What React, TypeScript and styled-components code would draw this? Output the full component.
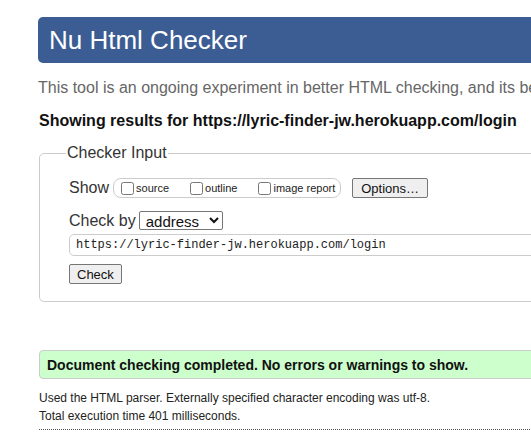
import React from "react";
import styled, { createGlobalStyle } from "styled-components";

const GlobalStyle = createGlobalStyle`
  html, body {
    margin: 0;
    padding: 0;
    background: #fff;
    overflow: hidden;
  }
  body {
    font-family: "Liberation Sans", Arial, sans-serif;
    color: #222;
  }
`;

const Page = styled.div`
  width: 1000px;
  padding: 17px 0 0 38px;
`;

const Title = styled.h1`
  margin: 0;
  height: 46px;
  padding: 0 11px;
  display: flex;
  align-items: center;
  background: #3b5d93;
  color: #fff;
  font-size: 26px;
  font-weight: normal;
  border-radius: 5px;
`;

const Intro = styled.p`
  margin: 16px 0 0;
  font-size: 16px;
  line-height: 18px;
  color: #666;
  white-space: nowrap;
`;

const Results = styled.p`
  margin: 15px 0 0 1px;
  font-size: 16px;
  line-height: 18px;
  font-weight: bold;
  color: #111;
  white-space: nowrap;
`;

const Fieldset = styled.fieldset`
  margin: 14px 0 0 1px;
  padding: 8px 29px 17px;
  border: 1px solid #ccc;
  border-radius: 5px;
`;

const Legend = styled.legend`
  padding: 0 1px;
  margin-left: -3px;
  font-size: 16px;
  color: #333;
`;

const Row = styled.div<{ $mt: number }>`
  display: flex;
  align-items: center;
  gap: 3px;
  font-size: 16px;
  color: #333;
  margin-top: ${(p) => p.$mt}px;
`;

const Options = styled.div`
  display: flex;
  align-items: center;
  height: 18px;
  border: 1px solid #ccc;
  border-radius: 8px;
  padding: 0 5px 0 7px;
  gap: 21px;
  margin-left: 1px;
`;

const CheckLabel = styled.label`
  display: flex;
  align-items: center;
  gap: 2px;
  font-size: 11px;
  color: #222;
  input {
    margin: 0;
    width: 13px;
    height: 13px;
  }
`;

const Button = styled.button<{ $ml?: number; $px: number }>`
  font-family: "Liberation Sans", Arial, sans-serif;
  font-size: 13px;
  color: #111;
  background: #efefef;
  border: 1px solid #767676;
  border-radius: 2px;
  padding: 0 ${(p) => p.$px}px;
  height: 20px;
  margin-left: ${(p) => p.$ml ?? 0}px;
`;

const Select = styled.select`
  font-family: "Liberation Sans", Arial, sans-serif;
  font-size: 15px;
  width: 84px;
  height: 19px;
  padding: 0 2px;
  border: 1px solid #767676;
  border-radius: 2px;
  background: #fff;
  color: #111;
`;

const UrlInput = styled.input`
  display: block;
  box-sizing: border-box;
  width: 100%;
  height: 22px;
  margin-top: 4px;
  padding: 0 6px;
  font-family: "Liberation Mono", "DejaVu Sans Mono", monospace;
  font-size: 12px;
  color: #222;
  border: 1px solid #ccc;
  border-radius: 5px;
`;

const Success = styled.div`
  margin: 48px 0 0 1px;
  height: 29px;
  box-sizing: border-box;
  padding: 0 7px;
  display: flex;
  align-items: center;
  background: #ccffcc;
  border: 1px solid #ccc;
  border-radius: 4px;
  font-size: 14px;
  font-weight: bold;
  color: #111;
`;

const Notes = styled.div`
  margin: 10px 0 0 1px;
`;

const Note = styled.p`
  margin: 0;
  font-size: 12px;
  line-height: 18px;
  color: #222;
`;

const Rule = styled.hr`
  margin: 4px 0 0 1px;
  border: none;
  border-top: 1px dotted #555;
`;

export default function App() {
  return (
    <Page>
      <GlobalStyle />
      <Title>Nu Html Checker</Title>
      <Intro>
        This tool is an ongoing experiment in better HTML checking, and its
        behavior remains subject to change
      </Intro>
      <Results>Showing results for https://lyric-finder-jw.herokuapp.com/login</Results>
      <Fieldset>
        <Legend>Checker Input</Legend>
        <Row $mt={8}>
          Show
          <Options>
            <CheckLabel>
              <input type="checkbox" /> source
            </CheckLabel>
            <CheckLabel>
              <input type="checkbox" /> outline
            </CheckLabel>
            <CheckLabel>
              <input type="checkbox" /> image report
            </CheckLabel>
          </Options>
          <Button $ml={8} $px={8}>
            Options…
          </Button>
        </Row>
        <Row $mt={13}>
          Check by
          <Select defaultValue="address">
            <option value="address">address</option>
            <option value="file">file upload</option>
            <option value="text">text input</option>
          </Select>
        </Row>
        <UrlInput defaultValue="https://lyric-finder-jw.herokuapp.com/login" />
        <Row $mt={8}>
          <Button $px={7}>Check</Button>
        </Row>
      </Fieldset>
      <Success>Document checking completed. No errors or warnings to show.</Success>
      <Notes>
        <Note>Used the HTML parser. Externally specified character encoding was utf-8.</Note>
        <Note>Total execution time 401 milliseconds.</Note>
      </Notes>
      <Rule />
    </Page>
  );
}
